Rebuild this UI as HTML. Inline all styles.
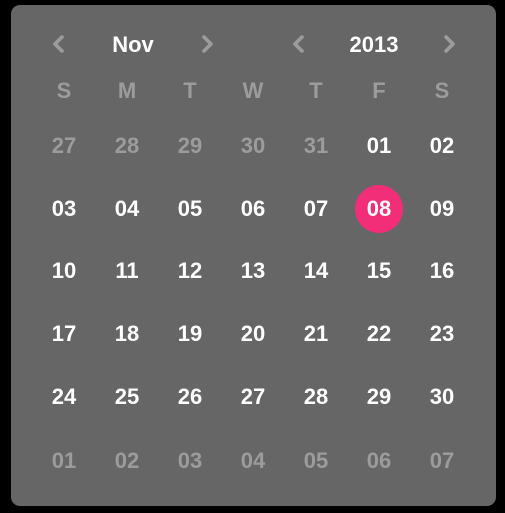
<!DOCTYPE html><html><head><style>
body{margin:0;width:505px;height:513px;background:#000;font-family:"Liberation Sans",sans-serif;position:relative;overflow:hidden}
.p{position:absolute;left:11px;top:5px;width:485px;height:501px;background:#666;border-radius:9px}
.t{position:absolute;transform:translate(-50%,-50%);font-weight:bold;font-size:22px;color:#fff;white-space:nowrap}
.g{color:#9c9c9c}
.h{font-size:22px}
.c{position:absolute;left:355px;top:185px;width:48px;height:48px;border-radius:50%;background:#f22e78}
svg{position:absolute}
</style></head><body><div class="p"></div><div class="c"></div>
<svg width="505" height="80" style="left:0;top:0"><g fill="none" stroke="#9c9c9c" stroke-width="3.6" stroke-linecap="round" stroke-linejoin="round">
<path d="M62 37 L55 44 L62 51"/><path d="M204 37 L211 44 L204 51"/><path d="M302 37 L295 44 L302 51"/><path d="M446 37 L453 44 L446 51"/></g></svg>
<div id="w"></div>
<script>
var xs=[64,127,190,253,316,379,442],ys=[146,209,271,334,397,461],h='';
function t(x,y,s,c){h+='<div class="t '+(c||'')+'" style="left:'+x+'px;top:'+y+'px">'+s+'</div>';}
t(133,45,'Nov','h');t(374,45,'2013','h');
'SMTWTFS'.split('').forEach(function(d,i){t(xs[i],91,d,'g');});
var days=[];for(var i=27;i<=31;i++)days.push([i,1]);for(i=1;i<=30;i++)days.push([i,0]);for(i=1;i<=7;i++)days.push([i,1]);
days.forEach(function(d,k){var s=(d[0]<10?'0':'')+d[0];t(xs[k%7],ys[Math.floor(k/7)],s,d[1]?'g':'');});
document.getElementById('w').innerHTML=h;
</script></body></html>
